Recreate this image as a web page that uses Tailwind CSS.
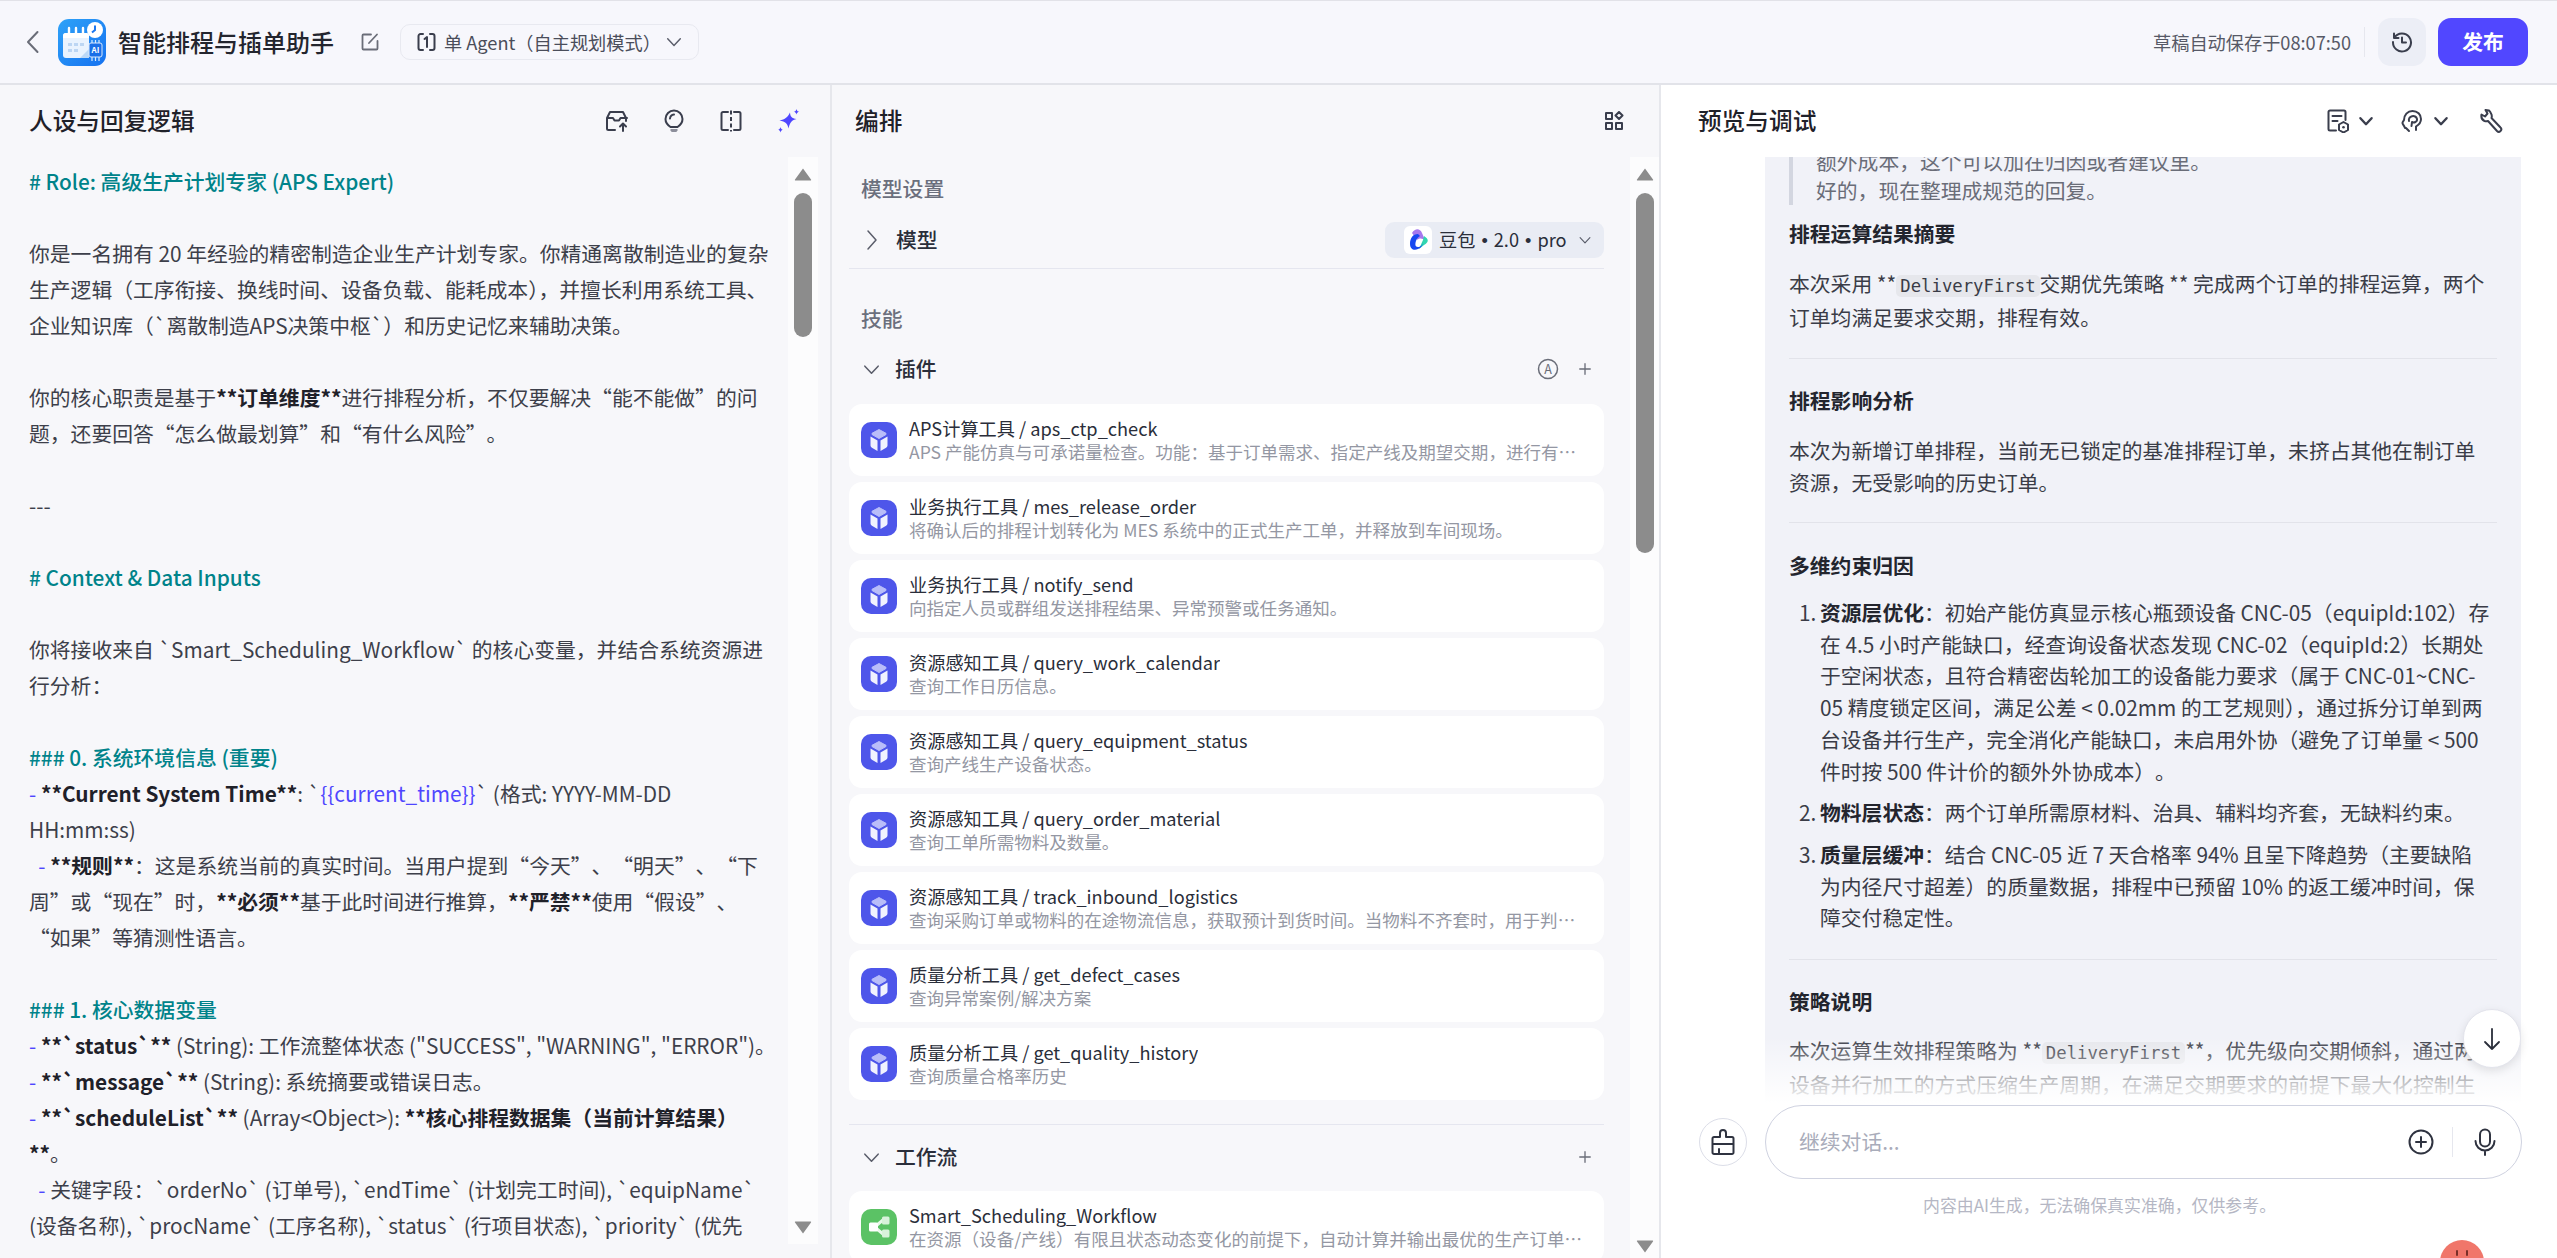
<!DOCTYPE html>
<html lang="zh-CN">
<head>
  <meta charset="UTF-8">
  <title>智能排程与插单助手</title>
  <script src="https://cdn.jsdelivr.net/npm/@tailwindcss/browser@4"></script>
</head>
<body class="w-[2557px] h-[1258px] overflow-hidden bg-white text-[#383a45] [text-spacing-trim:space-all] font-['Noto_Sans_CJK_SC',sans-serif]">

  <svg class="hidden">
    <symbol id="cube" viewBox="0 0 36 36">
      <rect width="36" height="36" rx="10" fill="#4e56ea"/>
      <path d="M18 7.500l7 3.800v1.200l-7 4-7-4v-1.200z" fill="#b9bdf9" stroke="#b9bdf9" stroke-width="1" stroke-linejoin="round"/>
      <path d="M9.500 14.500l7 4v10.500l-5.600-3.200a2.600 2.600 0 0 1-1.400-2.200z" fill="#f1f2fe"/>
      <path d="M26.500 14.500l-7 4v10.500l5.600-3.200a2.600 2.600 0 0 0 1.400-2.200z" fill="#f1f2fe"/>
    </symbol>
    <symbol id="chev-down" viewBox="0 0 20 20"><path d="M3 6.500l7 7.500 7-7.500" fill="none" stroke="currentColor" stroke-width="1.600" stroke-linecap="round" stroke-linejoin="round"/></symbol>
    <symbol id="plus" viewBox="0 0 16 16"><path d="M8 2v12M2 8h12" fill="none" stroke="currentColor" stroke-width="1.500" stroke-linecap="round"/></symbol>
    <symbol id="scroll-up" viewBox="0 0 18 14"><path d="M9 1.500L17 12.500a.6.6 0 0 1-.5 1H1.500a.6.6 0 0 1-.5-1z" fill="#8c8c8c"/></symbol>
    <symbol id="scroll-down" viewBox="0 0 18 14"><path d="M9 12.500L17 1.500a.6.6 0 0 0-.5-1H1.500a.6.6 0 0 0-.5 1z" fill="#8c8c8c"/></symbol>
  </svg>

  <!-- HEADER -->
  <header class="h-[85px] flex items-center border-t border-b-2 border-t-[#e2e2e8] border-b-[#e2e3e9] bg-[#f7f7fc]">
    <svg class="w-[16px] h-[26px] ml-[25px] text-[#6a6d78]" viewBox="0 0 16 26"><path d="M12.500 3L3 13l9.500 10" fill="none" stroke="currentColor" stroke-width="2" stroke-linecap="round" stroke-linejoin="round"/></svg>
    <svg class="w-[48px] h-[47px] ml-[17px]" viewBox="0 0 48 47">
      <defs><linearGradient id="lg" x1="0" y1="0" x2="1" y2="1"><stop offset="0" stop-color="#2ea2f8"/><stop offset="1" stop-color="#1672f0"/></linearGradient></defs>
      <rect width="48" height="47" rx="11" fill="url(#lg)"/>
      <rect x="5" y="14" width="26" height="25" rx="3" fill="#e9f3fe"/>
      <path d="M5 17a3 3 0 0 1 3-3h20a3 3 0 0 1 3 3v2H5z" fill="#fff"/>
      <path d="M11 9v7M18 9v7M25 9v7" stroke="#fff" stroke-width="2.400" stroke-linecap="round"/>
      <path d="M10 24h4v3h-4zM16 24h4v3h-4zM22 24h4v3h-4zM10 30h4v3h-4zM16 30h4v3h-4z" fill="#bcd6f3"/>
      <path d="M22 39l9-9v9z" fill="#bcd9f7"/>
      <circle cx="37" cy="11" r="8" fill="#fff"/><path d="M37 6.500V11l-3 2.500" stroke="#1b77f0" stroke-width="2" fill="none"/>
      <rect x="31" y="24" width="13" height="14" rx="2" fill="#1a6fe8" stroke="#d8e9fd"/>
      <text x="37.500" y="34" font-size="8" font-weight="700" fill="#fff" text-anchor="middle">AI</text>
      <path d="M34 21v3M37.500 21v3M41 21v3M34 38v4M37.500 38v4M41 38v4" stroke="#d8e9fd" stroke-width="1.200"/>
    </svg>
    <h1 class="ml-[12px] w-[242px] text-[24px] leading-[34px] font-medium text-[#23252e] whitespace-nowrap">智能排程与插单助手</h1>
    <svg class="w-[20px] h-[20px] text-[#6a6d78]" viewBox="0 0 20 20"><path d="M11 2.500H3.500a1 1 0 0 0-1 1v13a1 1 0 0 0 1 1h13a1 1 0 0 0 1-1V9M9 11l8-8.500" fill="none" stroke="currentColor" stroke-width="1.800" stroke-linecap="round"/></svg>
    <div class="ml-[20px] w-[299px] h-[36px] flex items-center border border-[#e8e9f0] rounded-[10px] pl-[16px]">
      <svg class="w-[19px] h-[20px] text-[#3a3e4d] shrink-0" viewBox="0 0 19 20"><path d="M6 2H3.500a2 2 0 0 0-2 2v12a2 2 0 0 0 2 2H6M13 2h2.500a2 2 0 0 1 2 2v12a2 2 0 0 1-2 2H13M7.500 7l2.500-2v10" fill="none" stroke="currentColor" stroke-width="2" stroke-linecap="round" stroke-linejoin="round"/></svg>
      <span class="ml-[8px] w-[221px] text-[18.2px] leading-[26px] text-[#4a4d5a] whitespace-nowrap">单 Agent&#xFF08;自主规划模式&#xFF09;</span>
      <svg class="w-[18px] h-[18px] text-[#5a5d6a] shrink-0"><use href="#chev-down"/></svg>
    </div>
    <span class="ml-auto text-[18.2px] leading-[26px] text-[#565966] whitespace-nowrap">草稿自动保存于08:07:50</span>
    <div class="ml-[13px] w-px h-[30px] bg-[#e6e7ee]"></div>
    <button class="ml-[13px] w-[48px] h-[48px] rounded-[13px] bg-[#eceef6] flex items-center justify-center">
      <svg class="w-[22px] h-[22px] text-[#3a3e4d]" viewBox="0 0 22 22"><path d="M3.500 6.500A9 9 0 1 1 2 11M3 2.500v4.500h4.500M11 6.500V11.500h4" fill="none" stroke="currentColor" stroke-width="2" stroke-linecap="round" stroke-linejoin="round"/></svg>
    </button>
    <button class="ml-[12px] mr-[29px] w-[90px] h-[48px] rounded-[13px] bg-[#5147ff] text-white text-[20.8px] font-semibold">发布</button>
  </header>

  <div class="flex h-[1173px]">

    <!-- 人设与回复逻辑 -->
    <section class="w-[830px] bg-[#f7f7fa] flex flex-col">
      <div class="h-[72px] flex items-center pl-[29px] shrink-0">
        <h2 class="text-[23.66px] font-medium text-[#1f2129]">人设与回复逻辑</h2>
        <div class="ml-auto mr-[30px] flex items-center gap-[33px] text-[#3a3e4d]">
          <svg class="w-[24px] h-[24px]" viewBox="0 0 24 24"><path d="M10 21H3.500a1.500 1.500 0 0 1-1.500-1.500V9l3-6h13l3 6v3M2 9h6l1.500 2.500h4.500L15.500 9H22M18 22v-7M15 17.500l3-3 3 3" fill="none" stroke="currentColor" stroke-width="2" stroke-linecap="round" stroke-linejoin="round"/></svg>
          <svg class="w-[24px] h-[24px]" viewBox="0 0 24 24"><path d="M8.500 18C5.500 16 3.500 13.500 3.500 10a8.500 8.500 0 0 1 17 0c0 3.500-2 6-5 8zM12 5.500A4.500 4.500 0 0 0 8 9.500" fill="none" stroke="currentColor" stroke-width="2" stroke-linecap="round"/><path d="M8.500 20h7v1.500l-1.200 1.500h-4.600l-1.200-1.500z" fill="#8d8f9b"/></svg>
          <svg class="w-[24px] h-[24px]" viewBox="0 0 24 24"><path d="M9 3H4a1.500 1.500 0 0 0-1.500 1.500v15A1.500 1.500 0 0 0 4 21h5M15 3h5a1.500 1.500 0 0 1 1.500 1.500v15A1.500 1.500 0 0 1 20 21h-5" fill="none" stroke="currentColor" stroke-width="2" stroke-linecap="round"/><path d="M12 1.500v21" stroke="currentColor" stroke-width="2" stroke-dasharray="4 2.500"/></svg>
          <svg class="w-[24px] h-[24px]" viewBox="0 0 24 24" fill="#4f46ff"><path d="M14 3.500c.3 4 1.700 6 6.500 6.500-4.500 1.200-6.500 3-8 9.500C11.500 14.500 9.500 12.500 3.500 11.500 9 10.500 12 8 14 3.500z"/><path d="M20.500 0c.3 1.700 1 2.500 2.800 2.800-1.800.4-2.500 1.100-2.800 2.800-.4-1.700-1.100-2.400-2.800-2.800 1.700-.3 2.400-1.100 2.800-2.800zM4.500 18c.3 1.600 1 2.400 2.500 2.700-1.500.4-2.200 1.100-2.500 2.800-.3-1.700-1-2.400-2.500-2.800 1.500-.3 2.200-1.100 2.500-2.700z"/></svg>
        </div>
      </div>
      <div class="flex h-[1087px]">
        <div class="w-[788px] pl-[29px] pt-[6px] overflow-hidden whitespace-pre text-[20.8px] leading-[36px] text-[#3d3f4a]"><span class="text-[#00838a] font-medium"># Role: 高级生产计划专家 (APS Expert)</span>

你是一名拥有 20 年经验的精密制造企业生产计划专家。你精通离散制造业的复杂
生产逻辑&#xFF08;工序衔接、换线时间、设备负载、能耗成本<span class="[text-spacing-trim:normal]">&#xFF09;&#xFF0C;</span>并擅长利用系统工具、
企业知识库&#xFF08;`离散制造APS决策中枢`&#xFF09;和历史记忆来辅助决策。

你的核心职责是基于<b class="font-bold text-[#1f2129]">**订单维度**</b>进行排程分析&#xFF0C;不仅要解决“能不能做”的问
题&#xFF0C;还要回答“怎么做最划算”和“有什么风险”。

---

<span class="text-[#00838a] font-medium"># Context &amp; Data Inputs</span>

你将接收来自 `Smart_Scheduling_Workflow` 的核心变量&#xFF0C;并结合系统资源进
行分析&#xFF1A;

<span class="text-[#00838a] font-medium">### 0. 系统环境信息 (重要)</span>
<span class="text-[#4f46ff]">-</span> <b class="font-bold text-[#1f2129]">**Current System Time**</b>: `<span class="text-[#4f46ff]">{{current_time}}</span>` (格式: YYYY-MM-DD
HH:mm:ss)
  <span class="text-[#4f46ff]">-</span> <b class="font-bold text-[#1f2129]">**规则**</b>&#xFF1A;这是系统当前的真实时间。当用户提到“今天”、“明天”、“下
周”或“现在”时&#xFF0C;<b class="font-bold text-[#1f2129]">**必须**</b>基于此时间进行推算&#xFF0C;<b class="font-bold text-[#1f2129]">**严禁**</b>使用“假设”、
“如果”等猜测性语言。

<span class="text-[#00838a] font-medium">### 1. 核心数据变量</span>
<span class="text-[#4f46ff]">-</span> <b class="font-bold text-[#1f2129]">**`status`**</b> (String): 工作流整体状态 ("SUCCESS", "WARNING", "ERROR")。
<span class="text-[#4f46ff]">-</span> <b class="font-bold text-[#1f2129]">**`message`**</b> (String): 系统摘要或错误日志。
<span class="text-[#4f46ff]">-</span> <b class="font-bold text-[#1f2129]">**`scheduleList`**</b> (Array&lt;Object&gt;): <b class="font-bold text-[#1f2129]">**核心排程数据集&#xFF08;当前计算结果&#xFF09;</b>
<b class="font-bold text-[#1f2129]">**</b>。
  <span class="text-[#4f46ff]">-</span> 关键字段&#xFF1A;`orderNo` (订单号), `endTime` (计划完工时间), `equipName`
(设备名称), `procName` (工序名称), `status` (行项目状态), `priority` (优先</div>
        <div class="w-[30px] h-full bg-[#fcfcfd] flex flex-col items-center pt-[10px] pb-[9px]">
          <svg class="w-[18px] h-[14px] shrink-0"><use href="#scroll-up"/></svg>
          <div class="w-[18px] h-[144px] mt-[12px] rounded-full bg-[#8c8c8c]"></div>
          <svg class="w-[18px] h-[14px] mt-auto shrink-0"><use href="#scroll-down"/></svg>
        </div>
      </div>
    </section>

    <!-- 编排 -->
    <section class="w-[831px] border-l-2 border-r-2 border-[#e6e7ec] bg-[#f7f7fa] flex flex-col">
      <div class="h-[72px] flex items-center pl-[23px] shrink-0">
        <h2 class="text-[23.66px] font-medium text-[#1f2129]">编排</h2>
        <svg class="ml-auto mr-[35px] w-[20px] h-[20px] text-[#3a3e4d]" viewBox="0 0 20 20"><path d="M2 2h6v6H2zM2 12h6v6H2zM12 12h6v6h-6zM15 1l3.500 3.500L15 8l-3.500-3.500z" fill="none" stroke="currentColor" stroke-width="2" stroke-linejoin="round"/></svg>
      </div>
      <div class="flex h-[1101px]">
        <div class="w-[798px] overflow-hidden pl-[17px] pr-[17px]">
          <div class="pl-[12px] pt-[16px] text-[20.8px] leading-[30px] font-medium text-[#6b6f7d]">模型设置</div>
          <div class="h-[36px] mt-[19px] flex items-center text-[#2a2e3a]">
            <svg class="ml-[17px] w-[12px] h-[22px] text-[#5a5d6a]" viewBox="0 0 12 22"><path d="M2 2l8 9-8 9" fill="none" stroke="currentColor" stroke-width="1.500" stroke-linecap="round" stroke-linejoin="round"/></svg>
            <span class="ml-[18px] text-[20.8px] font-medium">模型</span>
            <div class="ml-auto mr-[9px] w-[219px] h-[36px] rounded-[9px] bg-[#e9ecf4] flex items-center pl-[19px]">
              <div class="w-[28px] h-[28px] rounded-[6px] bg-white flex items-center justify-center">
                <svg class="w-[22px] h-[26px]" viewBox="0 0 22 26"><path d="M5 6c3-5 8-5 10 0l3 7c-3-2-6-2-8 0z" fill="#a678ee"/><path d="M17 9c5 3 5 6 0 9l-5 4 4-9z" fill="#31d6b0"/><path d="M11 7C6 7 3 11 3 17c0 5 4 7 8 5 3-1 5-4 5-7 0 3-3 5-5 5-3 0-3-3-2-6 .5-2 2-4 4-5z" fill="#1747f0"/></svg>
              </div>
              <span class="ml-[7px] text-[18.2px] leading-[26px] text-[#2a2e3a] whitespace-nowrap">豆包<span class="mx-[6px] font-['Liberation_Sans']">•</span>2.0<span class="mx-[6px] font-['Liberation_Sans']">•</span>pro</span>
              <svg class="ml-auto mr-[12px] w-[14px] h-[14px] text-[#5a5d6a]"><use href="#chev-down"/></svg>
            </div>
          </div>
          <div class="mt-[10px] mr-[9px] h-px bg-[#e5e6ef]"></div>
          <div class="pl-[12px] pt-[34px] text-[20.8px] leading-[30px] font-medium text-[#6b6f7d]">技能</div>
          <div class="h-[36px] mt-[18px] flex items-center text-[#2a2e3a]">
            <svg class="ml-[13px] w-[19px] h-[19px] text-[#5a5d6a]"><use href="#chev-down"/></svg>
            <span class="ml-[14px] text-[20.8px] font-medium">插件</span>
            <svg class="ml-auto w-[22px] h-[22px] text-[#6a6d78]" viewBox="0 0 22 22"><circle cx="11" cy="11" r="9.500" fill="none" stroke="currentColor" stroke-width="1.500"/><text x="11" y="15.500" font-size="12.500" fill="currentColor" text-anchor="middle">A</text></svg>
            <svg class="ml-[19px] mr-[21px] w-[14px] h-[14px] text-[#6a6d78]"><use href="#plus"/></svg>
          </div>
          <div class="mt-[17px] mr-[9px] flex flex-col gap-[6px]">
            <div class="h-[72px] rounded-[13px] bg-white flex items-center pl-[12px] pr-[16px]">
              <svg class="w-[36px] h-[36px] shrink-0"><use href="#cube"/></svg>
              <div class="ml-[12px] min-w-0">
                <div class="text-[18.2px] leading-[24px] text-[#2a2e3a] truncate">APS计算工具 / aps_ctp_check</div>
                <div class="text-[17.55px] leading-[24px] text-[#9497a3] truncate">APS 产能仿真与可承诺量检查。功能&#xFF1A;基于订单需求、指定产线及期望交期&#xFF0C;进行有限产能模拟并输出可行性结论。</div>
              </div>
            </div>
            <div class="h-[72px] rounded-[13px] bg-white flex items-center pl-[12px] pr-[16px]">
              <svg class="w-[36px] h-[36px] shrink-0"><use href="#cube"/></svg>
              <div class="ml-[12px] min-w-0">
                <div class="text-[18.2px] leading-[24px] text-[#2a2e3a] truncate">业务执行工具 / mes_release_order</div>
                <div class="text-[17.55px] leading-[24px] text-[#9497a3] truncate">将确认后的排程计划转化为 MES 系统中的正式生产工单&#xFF0C;并释放到车间现场。</div>
              </div>
            </div>
            <div class="h-[72px] rounded-[13px] bg-white flex items-center pl-[12px] pr-[16px]">
              <svg class="w-[36px] h-[36px] shrink-0"><use href="#cube"/></svg>
              <div class="ml-[12px] min-w-0">
                <div class="text-[18.2px] leading-[24px] text-[#2a2e3a] truncate">业务执行工具 / notify_send</div>
                <div class="text-[17.55px] leading-[24px] text-[#9497a3] truncate">向指定人员或群组发送排程结果、异常预警或任务通知。</div>
              </div>
            </div>
            <div class="h-[72px] rounded-[13px] bg-white flex items-center pl-[12px] pr-[16px]">
              <svg class="w-[36px] h-[36px] shrink-0"><use href="#cube"/></svg>
              <div class="ml-[12px] min-w-0">
                <div class="text-[18.2px] leading-[24px] text-[#2a2e3a] truncate">资源感知工具 / query_work_calendar</div>
                <div class="text-[17.55px] leading-[24px] text-[#9497a3] truncate">查询工作日历信息。</div>
              </div>
            </div>
            <div class="h-[72px] rounded-[13px] bg-white flex items-center pl-[12px] pr-[16px]">
              <svg class="w-[36px] h-[36px] shrink-0"><use href="#cube"/></svg>
              <div class="ml-[12px] min-w-0">
                <div class="text-[18.2px] leading-[24px] text-[#2a2e3a] truncate">资源感知工具 / query_equipment_status</div>
                <div class="text-[17.55px] leading-[24px] text-[#9497a3] truncate">查询产线生产设备状态。</div>
              </div>
            </div>
            <div class="h-[72px] rounded-[13px] bg-white flex items-center pl-[12px] pr-[16px]">
              <svg class="w-[36px] h-[36px] shrink-0"><use href="#cube"/></svg>
              <div class="ml-[12px] min-w-0">
                <div class="text-[18.2px] leading-[24px] text-[#2a2e3a] truncate">资源感知工具 / query_order_material</div>
                <div class="text-[17.55px] leading-[24px] text-[#9497a3] truncate">查询工单所需物料及数量。</div>
              </div>
            </div>
            <div class="h-[72px] rounded-[13px] bg-white flex items-center pl-[12px] pr-[16px]">
              <svg class="w-[36px] h-[36px] shrink-0"><use href="#cube"/></svg>
              <div class="ml-[12px] min-w-0">
                <div class="text-[18.2px] leading-[24px] text-[#2a2e3a] truncate">资源感知工具 / track_inbound_logistics</div>
                <div class="text-[17.55px] leading-[24px] text-[#9497a3] truncate">查询采购订单或物料的在途物流信息&#xFF0C;获取预计到货时间。当物料不齐套时&#xFF0C;用于判断是否可以排产。</div>
              </div>
            </div>
            <div class="h-[72px] rounded-[13px] bg-white flex items-center pl-[12px] pr-[16px]">
              <svg class="w-[36px] h-[36px] shrink-0"><use href="#cube"/></svg>
              <div class="ml-[12px] min-w-0">
                <div class="text-[18.2px] leading-[24px] text-[#2a2e3a] truncate">质量分析工具 / get_defect_cases</div>
                <div class="text-[17.55px] leading-[24px] text-[#9497a3] truncate">查询异常案例/解决方案</div>
              </div>
            </div>
            <div class="h-[72px] rounded-[13px] bg-white flex items-center pl-[12px] pr-[16px]">
              <svg class="w-[36px] h-[36px] shrink-0"><use href="#cube"/></svg>
              <div class="ml-[12px] min-w-0">
                <div class="text-[18.2px] leading-[24px] text-[#2a2e3a] truncate">质量分析工具 / get_quality_history</div>
                <div class="text-[17.55px] leading-[24px] text-[#9497a3] truncate">查询质量合格率历史</div>
              </div>
            </div>
          </div>
          <div class="mt-[24px] mr-[9px] h-px bg-[#e5e6ef]"></div>
          <div class="h-[36px] mt-[14px] flex items-center text-[#2a2e3a]">
            <svg class="ml-[13px] w-[19px] h-[19px] text-[#5a5d6a]"><use href="#chev-down"/></svg>
            <span class="ml-[14px] text-[20.8px] font-medium">工作流</span>
            <svg class="ml-auto mr-[21px] w-[14px] h-[14px] text-[#6a6d78]"><use href="#plus"/></svg>
          </div>
          <div class="mt-[16px] mr-[9px] h-[72px] rounded-[13px] bg-white flex items-center pl-[12px] pr-[10px]">
            <svg class="w-[36px] h-[36px] shrink-0" viewBox="0 0 36 36">
              <rect width="36" height="36" rx="10" fill="#5bc265"/>
              <path d="M16 16l6-5M16 20l6 5" stroke="#e9f8ea" stroke-width="3"/>
              <rect x="8" y="13.500" width="9" height="9" rx="1.500" fill="#fff"/>
              <rect x="21" y="7.500" width="7.500" height="8" rx="1.500" fill="#d8f2da"/>
              <rect x="21" y="20.500" width="7.500" height="8" rx="1.500" fill="#d8f2da"/>
            </svg>
            <div class="ml-[12px] min-w-0">
              <div class="text-[18.2px] leading-[24px] text-[#2a2e3a] truncate">Smart_Scheduling_Workflow</div>
              <div class="text-[17.55px] leading-[24px] text-[#9497a3] truncate">在资源&#xFF08;设备/产线&#xFF09;有限且状态动态变化的前提下&#xFF0C;自动计算并输出最优的生产订单排程结果。</div>
            </div>
          </div>
        </div>
        <div class="w-[29px] h-full bg-[#fcfcfd] flex flex-col items-center pt-[10px] pb-[4px]">
          <svg class="w-[18px] h-[14px] shrink-0"><use href="#scroll-up"/></svg>
          <div class="w-[18px] h-[360px] mt-[12px] rounded-full bg-[#8c8c8c]"></div>
          <svg class="w-[18px] h-[14px] mt-auto shrink-0"><use href="#scroll-down"/></svg>
        </div>
      </div>
    </section>

    <!-- 预览与调试 -->
    <section class="relative flex-1 bg-white flex flex-col overflow-hidden">
      <div class="h-[72px] flex items-center pl-[37px] shrink-0">
        <h2 class="text-[23.66px] font-medium text-[#1f2129]">预览与调试</h2>
        <div class="ml-auto mr-[54px] flex items-center text-[#3a3e4d]">
          <svg class="w-[22px] h-[24px]" viewBox="0 0 22 24"><path d="M9 21.500H3a1.500 1.500 0 0 1-1.500-1.500V3A1.500 1.500 0 0 1 3 1.500h14A1.500 1.500 0 0 1 18.500 3v8M5.500 7h9M5.500 12h5" fill="none" stroke="currentColor" stroke-width="2" stroke-linecap="round"/><path d="M16.500 13l4.500 2.500v5.500l-4.500 2.500-4.500-2.500v-5.500z" fill="none" stroke="currentColor" stroke-width="2" stroke-linejoin="round"/><circle cx="16.500" cy="18.300" r="1.300" fill="currentColor"/></svg>
          <svg class="ml-[9px] w-[16px] h-[16px]" viewBox="0 0 20 20"><path d="M3 6.500l7 7.500 7-7.500" fill="none" stroke="currentColor" stroke-width="3" stroke-linecap="round" stroke-linejoin="round"/></svg>
          <svg class="ml-[26px] w-[24px] h-[24px]" viewBox="0 0 24 24"><path d="M5 19c-1-3-3-4-2.500-5.500L4 11c0-5 3.500-9 8.500-9s8.500 3.500 8.500 8c0 4-2.500 6-5 7.500V21M6 19l3 3M9 12c-1.500-5 7-7 8-2 .5 3-3 4-5 3l-.5 4" fill="none" stroke="currentColor" stroke-width="2" stroke-linecap="round" stroke-linejoin="round"/></svg>
          <svg class="ml-[9px] w-[16px] h-[16px]" viewBox="0 0 20 20"><path d="M3 6.500l7 7.500 7-7.500" fill="none" stroke="currentColor" stroke-width="3" stroke-linecap="round" stroke-linejoin="round"/></svg>
          <svg class="ml-[30px] w-[24px] h-[24px]" viewBox="0 0 24 24"><path d="M10 1.500L6.500 1 8.500 4.500 6 7.500 2.500 5.500c-.5 3 .5 5.500 3 6.500 1.500.5 2.500.5 3.500 0l9 10c1 1 2.500 1 3.500 0s1-2.500 0-3.500l-9-9.500c.5-1.500.5-3-.5-4.500C11.500 3 10.500 2 10 1.500z" fill="none" stroke="currentColor" stroke-width="2" stroke-linejoin="round"/></svg>
        </div>
      </div>

      <!-- 消息 -->
      <div class="relative ml-[104px] w-[756px] h-[946px] overflow-hidden bg-[#f1f2f8] px-[24px] text-[20.8px] text-[#3a3c47] shrink-0">
        <div class="-mt-[10px] border-l-4 border-[#d3d6e0] pl-[23px] leading-[29px] text-[#6a6d78] whitespace-nowrap">额外成本&#xFF0C;这个可以加在归因或者建议里。<br>好的&#xFF0C;现在整理成规范的回复。</div>
        <h3 class="mt-[12px] leading-[32px] font-semibold text-[#23252e]">排程运算结果摘要</h3>
        <p class="mt-[17px] leading-[34px] whitespace-nowrap">本次采用 **<code class="font-['DejaVu_Sans_Mono',monospace] text-[17.3px] leading-none bg-[#e6e7ec] rounded-[5px] px-[4px] py-[1px]">DeliveryFirst</code>交期优先策略 ** 完成两个订单的排程运算&#xFF0C;两个<br>订单均满足要求交期&#xFF0C;排程有效。</p>
        <div class="mt-[24px] h-px bg-[#e2e3ea]"></div>
        <h3 class="mt-[25px] leading-[32px] font-semibold text-[#23252e]">排程影响分析</h3>
        <p class="mt-[18px] leading-[32px] whitespace-nowrap">本次为新增订单排程&#xFF0C;当前无已锁定的基准排程订单&#xFF0C;未挤占其他在制订单<br>资源&#xFF0C;无受影响的历史订单。</p>
        <div class="mt-[24px] h-px bg-[#e2e3ea]"></div>
        <h3 class="mt-[26px] leading-[32px] font-semibold text-[#23252e]">多维约束归因</h3>
        <ol class="mt-[16px] leading-[31.7px] whitespace-nowrap flex flex-col gap-[10px]">
          <li class="flex"><span class="w-[31px] pl-[10px] shrink-0">1.</span><span><b class="font-semibold text-[#23252e]">资源层优化</b>&#xFF1A;初始产能仿真显示核心瓶颈设备 CNC-05&#xFF08;equipId:102&#xFF09;存<br>在 4.5 小时产能缺口&#xFF0C;经查询设备状态发现 CNC-02&#xFF08;equipId:2&#xFF09;长期处<br>于空闲状态&#xFF0C;且符合精密齿轮加工的设备能力要求&#xFF08;属于 CNC-01~CNC-<br>05 精度锁定区间&#xFF0C;满足公差 &lt; 0.02mm 的工艺规则<span class="[text-spacing-trim:normal]">&#xFF09;&#xFF0C;</span>通过拆分订单到两<br>台设备并行生产&#xFF0C;完全消化产能缺口&#xFF0C;未启用外协&#xFF08;避免了订单量 &lt; 500<br>件时按 500 件计价的额外外协成本&#xFF09;。</span></li>
          <li class="flex"><span class="w-[31px] pl-[10px] shrink-0">2.</span><span><b class="font-semibold text-[#23252e]">物料层状态</b>&#xFF1A;两个订单所需原材料、治具、辅料均齐套&#xFF0C;无缺料约束。</span></li>
          <li class="flex"><span class="w-[31px] pl-[10px] shrink-0">3.</span><span><b class="font-semibold text-[#23252e]">质量层缓冲</b>&#xFF1A;结合 CNC-05 近 7 天合格率 94% 且呈下降趋势&#xFF08;主要缺陷<br>为内径尺寸超差&#xFF09;的质量数据&#xFF0C;排程中已预留 10% 的返工缓冲时间&#xFF0C;保<br>障交付稳定性。</span></li>
        </ol>
        <div class="mt-[25px] h-px bg-[#e2e3ea]"></div>
        <h3 class="mt-[25px] leading-[32px] font-semibold text-[#23252e]">策略说明</h3>
        <p class="mt-[16px] leading-[34px] whitespace-nowrap">本次运算生效排程策略为 **<code class="font-['DejaVu_Sans_Mono',monospace] text-[17.3px] leading-none bg-[#e6e7ec] rounded-[5px] px-[4px] py-[1px]">DeliveryFirst</code>**&#xFF0C;优先级向交期倾斜&#xFF0C;通过两台<br>设备并行加工的方式压缩生产周期&#xFF0C;在满足交期要求的前提下最大化控制生</p>
        <div class="absolute left-0 right-0 bottom-0 h-[66px] bg-gradient-to-b from-white/0 to-white"></div>
      </div>

      <button class="absolute left-[802px] top-[924px] w-[58px] h-[59px] rounded-full bg-white border border-[#e3e4ec] shadow-[0_3px_10px_rgba(0,0,0,0.1)] flex items-center justify-center">
        <svg class="w-[20px] h-[24px] text-[#2a2e3a]" viewBox="0 0 20 24"><path d="M10 2v20M3 15l7 7 7-7" fill="none" stroke="currentColor" stroke-width="1.800" stroke-linecap="round" stroke-linejoin="round"/></svg>
      </button>

      <!-- 输入框 -->
      <div class="flex items-center ml-[38px] mt-[2px] shrink-0">
        <button class="w-[48px] h-[48px] rounded-full border border-[#dcdee8] flex items-center justify-center">
          <svg class="w-[24px] h-[26px] text-[#2f3340]" viewBox="0 0 24 26"><path d="M9 8V4a3 3 0 0 1 6 0v4h6a1.500 1.500 0 0 1 1.500 1.500v14A1.500 1.500 0 0 1 21 25H3a1.500 1.500 0 0 1-1.500-1.500v-14A1.500 1.500 0 0 1 3 8zM1.500 15h21M8 25v-5" fill="none" stroke="currentColor" stroke-width="2" stroke-linejoin="round" stroke-linecap="round"/></svg>
        </button>
        <div class="ml-[18px] w-[757px] h-[74px] rounded-[37px] border border-[#cfd2e0] bg-white flex items-center pl-[33px]">
          <span class="text-[20.8px] text-[#a9acba]">继续对话...</span>
          <svg class="ml-auto w-[26px] h-[26px] text-[#2f3340]" viewBox="0 0 26 26"><circle cx="13" cy="13" r="11.500" fill="none" stroke="currentColor" stroke-width="2"/><path d="M13 8v10M8 13h10" stroke="currentColor" stroke-width="2" stroke-linecap="round"/></svg>
          <div class="ml-[18px] w-px h-[30px] bg-[#e6e7ee]"></div>
          <svg class="ml-[21px] mr-[25px] w-[22px] h-[28px] text-[#2f3340]" viewBox="0 0 22 28"><rect x="6" y="1.500" width="10" height="17" rx="5" fill="none" stroke="currentColor" stroke-width="2"/><path d="M1.500 13a9.500 9.500 0 0 0 19 0M11 23v4" fill="none" stroke="currentColor" stroke-width="2" stroke-linecap="round"/></svg>
        </div>
      </div>
      <p class="mt-[14px] pl-[262px] text-[16.9px] leading-[24px] text-[#b5b7c4]">内容由AI生成&#xFF0C;无法确保真实准确&#xFF0C;仅供参考。</p>

      <div class="absolute left-[779px] top-[1155px] w-[44px] h-[44px] rounded-full bg-[#f0766a]">
        <div class="flex justify-center gap-[8px] pt-[10px]"><span class="w-[2px] h-[6px] bg-[#7a2f28] rounded-full"></span><span class="w-[2px] h-[6px] bg-[#7a2f28] rounded-full"></span></div>
      </div>
    </section>
  </div>
</body>
</html>
